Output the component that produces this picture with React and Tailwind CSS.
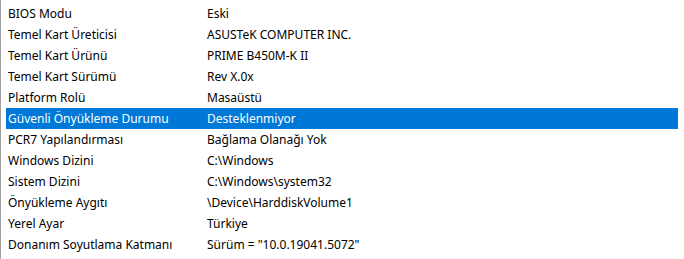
const rows = [
  ['BIOS Modu', 'Eski'],
  ['Temel Kart Üreticisi', 'ASUSTeK COMPUTER INC.'],
  ['Temel Kart Ürünü', 'PRIME B450M-K II'],
  ['Temel Kart Sürümü', 'Rev X.0x'],
  ['Platform Rolü', 'Masaüstü'],
  ['Güvenli Önyükleme Durumu', 'Desteklenmiyor'],
  ['PCR7 Yapılandırması', 'Bağlama Olanağı Yok'],
  ['Windows Dizini', 'C:\\Windows'],
  ['Sistem Dizini', 'C:\\Windows\\system32'],
  ['Önyükleme Aygıtı', '\\Device\\HarddiskVolume1'],
  ['Yerel Ayar', 'Türkiye'],
  ['Donanım Soyutlama Katmanı', 'Sürüm = "10.0.19041.5072"'],
];

const SELECTED = 5;

export default function App() {
  return (
    <div className="w-[684px] h-[259px] overflow-hidden bg-white flex font-['Noto_Sans',sans-serif] text-[12px] text-black">
      <div className="w-px bg-[#a0a0a0] shrink-0" />
      <div className="flex-1 pt-[3px] pl-[5px] pr-[6px]">
        {rows.map(([k, v], i) => (
          <div key={k}
            className={`flex items-center h-[21px] leading-none ${i === SELECTED ? 'bg-[#0078d7] text-white' : ''}`}>
            <span className="w-[201px] pl-[2px] shrink-0 whitespace-nowrap">{k}</span>
            <span className="whitespace-nowrap">{v}</span>
          </div>
        ))}
      </div>
    </div>
  );
}
